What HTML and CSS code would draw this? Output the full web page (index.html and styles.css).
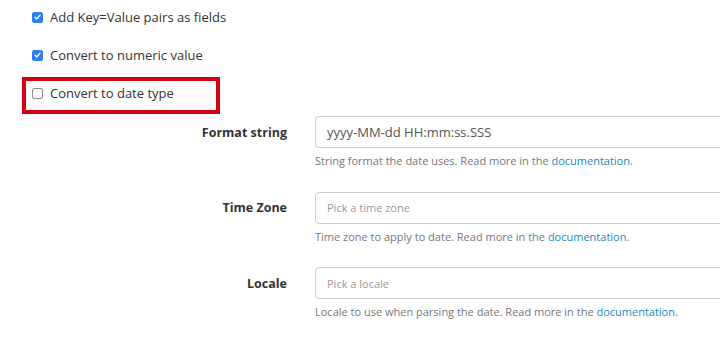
FILE: index.html
```html
<!DOCTYPE html>
<html lang="en">
<head>
<meta charset="utf-8">
<title>Converter options</title>
<link rel="stylesheet" href="styles.css">
</head>
<body>
<div class="page">
  <div class="checks">
    <label class="check">
      <span class="box checked"><svg viewBox="0 0 10 10" width="10" height="10"><path d="M2.3 5.2 L4.2 7.1 L7.8 2.9" fill="none" stroke="#fff" stroke-width="1.6" stroke-linecap="round" stroke-linejoin="round"/></svg></span>
      <span class="check-text">Add Key=Value pairs as fields</span>
    </label>
    <label class="check">
      <span class="box checked"><svg viewBox="0 0 10 10" width="10" height="10"><path d="M2.3 5.2 L4.2 7.1 L7.8 2.9" fill="none" stroke="#fff" stroke-width="1.6" stroke-linecap="round" stroke-linejoin="round"/></svg></span>
      <span class="check-text">Convert to numeric value</span>
    </label>
    <label class="check">
      <span class="box"></span>
      <span class="check-text">Convert to date type</span>
    </label>
    <div class="highlight"></div>
  </div>

  <div class="fields">
    <div class="field">
      <div class="field-label">Format string</div>
      <div class="input value">yyyy-MM-dd HH:mm:ss.SSS</div>
      <div class="help">String format the date uses. Read more in the <a href="#">documentation</a>.</div>
    </div>
    <div class="field">
      <div class="field-label">Time Zone</div>
      <div class="input placeholder">Pick a time zone</div>
      <div class="help">Time zone to apply to date. Read more in the <a href="#">documentation</a>.</div>
    </div>
    <div class="field">
      <div class="field-label">Locale</div>
      <div class="input placeholder">Pick a locale</div>
      <div class="help">Locale to use when parsing the date. Read more in the <a href="#">documentation</a>.</div>
    </div>
  </div>
</div>
</body>
</html>
```
FILE: styles.css
```css
html, body {
  margin: 0;
  padding: 0;
  overflow: hidden;
  background: #fff;
}
body {
  font-family: "Open Sans", "Liberation Sans", sans-serif;
  color: #333;
}
.page {
  width: 720px;
  height: 346px;
  overflow: hidden;
}
.checks {
  position: relative;
  display: flex;
  flex-direction: column;
  gap: 4px;
  padding-left: 32px;
}
.check {
  display: flex;
  align-items: center;
  gap: 7px;
  height: 34px;
  font-size: 13px;
}
.box {
  width: 9px;
  height: 9px;
  border: 1px solid #8a8a8a;
  border-radius: 2px;
  background: #fff;
  display: flex;
  align-items: center;
  justify-content: center;
}
.box.checked {
  background: #2e7ff6;
  border-color: #2e7ff6;
}
.box svg {
  display: block;
}
.check-text {
  color: #333;
}
.highlight {
  position: absolute;
  left: 22px;
  top: 77px;
  width: 190px;
  height: 29px;
  border: 4px solid #d40012;
}
.fields {
  margin-top: 6px;
  display: flex;
  flex-direction: column;
  gap: 22.5px;
}
.field {
  display: grid;
  grid-template-columns: 287px 420px;
  column-gap: 28px;
}
.field-label {
  grid-column: 1;
  grid-row: 1;
  align-self: center;
  text-align: right;
  font-weight: 700;
  font-size: 12.5px;
  color: #333;
}
.input {
  grid-column: 2;
  grid-row: 1;
  height: 30px;
  border: 1px solid #ccc;
  border-radius: 4px;
  box-sizing: content-box;
  padding: 0 11px;
  display: flex;
  align-items: center;
}
.input.value {
  font-size: 13px;
  color: #555;
}
.input.placeholder {
  font-size: 11px;
  color: #999;
}
.help {
  grid-column: 2;
  grid-row: 2;
  margin-top: 4px;
  font-size: 11px;
  line-height: 17px;
  color: #777;
}
.help a {
  color: #1787c6;
  text-decoration: none;
}
```
